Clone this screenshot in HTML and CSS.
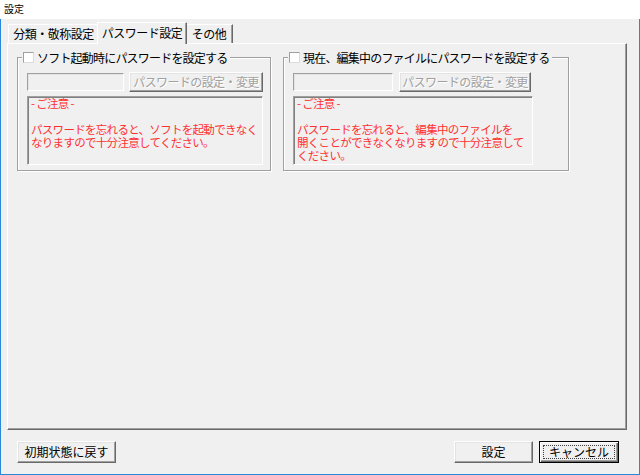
FILE: index.html
```html
<!DOCTYPE html>
<html lang="ja">
<head>
<meta charset="utf-8">
<link rel="stylesheet" href="styles.css">
</head>
<body>
<div class="window">
  <div class="titlebar">設定</div>
  <div class="client">
    <div class="tabs">
      <div class="tab t1">分類・敬称設定</div>
      <div class="tab sel t2">パスワード設定</div>
      <div class="tab t3">その他</div>
    </div>
    <div class="panel">
      <div class="groups">
        <fieldset class="group g1">
          <legend><span class="check"></span><span class="label">ソフト起動時にパスワードを設定する</span></legend>
          <div class="row">
            <div class="edit e1"></div>
            <div class="btn disabled b1">パスワードの設定・変更</div>
          </div>
          <div class="note n1">- ご注意 -<br><br>パスワードを忘れると、ソフトを起動できなく<br>なりますので十分注意してください。</div>
        </fieldset>
        <fieldset class="group g2">
          <legend><span class="check"></span><span class="label">現在、編集中のファイルにパスワードを設定する</span></legend>
          <div class="row">
            <div class="edit e2"></div>
            <div class="btn disabled b2">パスワードの設定・変更</div>
          </div>
          <div class="note n2">- ご注意 -<br><br>パスワードを忘れると、編集中のファイルを<br>開くことができなくなりますので十分注意して<br>ください。</div>
        </fieldset>
      </div>
    </div>
    <div class="footer">
      <div class="pbtn reset">初期状態に戻す</div>
      <div class="spacer"></div>
      <div class="pbtn ok">設定</div>
      <div class="pbtn cancel default"><span class="focus">キャンセル</span></div>
    </div>
  </div>
</div>
</body>
</html>
```

FILE: styles.css
```css
* { box-sizing: border-box; }
html, body { margin: 0; padding: 0; }
body {
  width: 640px;
  height: 475px;
  overflow: hidden;
  font-family: "Noto Sans CJK JP", "Noto Sans", sans-serif;
  font-size: 12px;
  color: #000;
  background: #fff;
}
.window {
  width: 640px;
  height: 475px;
  display: flex;
  flex-direction: column;
}
.titlebar {
  height: 19px;
  background: #fff;
  font-size: 10px;
  line-height: 18px;
  padding-left: 4px;
  color: #000;
}
.client {
  flex: 1;
  background: #f0f0f0;
  border: 1px solid #2b87d8;
  border-top: none;
  display: flex;
  flex-direction: column;
  padding-top: 3px;
}
.tabs {
  height: 21px;
  display: flex;
  align-items: flex-end;
  padding-left: 7px;
  position: relative;
  z-index: 1;
}
.tab {
  height: 19px;
  line-height: 17px;
  text-align: center;
  letter-spacing: -0.5px;
  background: #f0f0f0;
  border-top: 1px solid #fff;
  border-left: 1px solid #fff;
  border-right: 1px solid #696969;
  box-shadow: inset -1px 0 #a0a0a0;
  white-space: nowrap;
}
.t1 { width: 91px; }
.t2 { width: 90px; }
.t3 { width: 48px; }
.tab.sel {
  height: 22px;
  margin: 0 -2px -1px -2px;
  line-height: 19px;
  position: relative;
  z-index: 2;
}
.panel {
  height: 387px;
  margin-left: 6px;
  width: 620px;
  border-top: 1px solid #fff;
  border-left: 1px solid #fff;
  border-right: 1px solid #696969;
  border-bottom: 1px solid #696969;
  box-shadow: inset -1px -1px #a0a0a0;
  padding: 7px 0 0 9px;
}
.groups {
  display: flex;
  gap: 12px;
  align-items: flex-start;
}
.group {
  margin: 0;
  border: 1px solid #a0a0a0;
  box-shadow: inset 1px 1px #fff, 1px 1px #fff;
  padding: 8px 6px 6px 9px;
  height: 120px;
}
.g1 { width: 254px; }
.g2 { width: 286px; }
legend {
  margin-left: -5px;
  padding: 0 3px 0 1px;
  display: flex;
  align-items: center;
  gap: 3px;
  height: 13px;
  background: #f0f0f0;
}
.check {
  width: 11px;
  height: 11px;
  background: #fff;
  border: 1px solid;
  border-color: #a0a0a0 #dcdcdc #dcdcdc #a0a0a0;
}
.label {
  line-height: 13px;
  letter-spacing: -0.8px;
  white-space: nowrap;
}
.row {
  display: flex;
  align-items: center;
}
.edit {
  height: 18px;
  background: #f0f0f0;
  border: 1px solid;
  border-color: #a0a0a0 #fff #fff #a0a0a0;
  box-shadow: inset 1px 1px #e3e3e3;
}
.e1 { width: 97px; margin-right: 5px; }
.e2 { width: 100px; margin-right: 6px; }
.btn {
  height: 20px;
  text-align: center;
  line-height: 17px;
  letter-spacing: -0.6px;
  white-space: nowrap;
  background: #f0f0f0;
  border: 1px solid;
  border-color: #fff #696969 #696969 #fff;
  box-shadow: inset -1px -1px #a0a0a0, inset 1px 1px #e3e3e3;
}
.btn.disabled {
  color: #a0a0a0;
  text-shadow: 1px 1px #fff;
}
.b1 { width: 134px; }
.b2 { width: 132px; }
.note {
  margin-top: 4px;
  height: 69px;
  border: 1px solid;
  border-color: #a0a0a0 #fff #fff #a0a0a0;
  box-shadow: inset 1px 1px #808080;
  padding: 0 0 0 3px;
  color: #ff3030;
  font-size: 11.5px;
  letter-spacing: -0.7px;
  line-height: 13px;
  white-space: nowrap;
  overflow: hidden;
}
.n1 { width: 236px; }
.n2 { width: 240px; }
.footer {
  display: flex;
  align-items: flex-start;
  padding: 11px 20px 0 16px;
  gap: 6px;
}
.spacer { flex: 1; }
.pbtn {
  height: 22px;
  line-height: 19px;
  text-align: center;
  background: #f0f0f0;
  border: 1px solid;
  border-color: #fff #696969 #696969 #fff;
  box-shadow: inset -1px -1px #a0a0a0, inset 1px 1px #e3e3e3;
  white-space: nowrap;
}
.reset { width: 99px; }
.ok { width: 79px; }
.cancel { width: 80px; }
.pbtn.default {
  border: 1px solid #000;
  box-shadow: inset 1px 1px #fff, inset -1px -1px #696969, inset -2px -2px #a0a0a0;
  padding: 3px;
}
.focus {
  display: block;
  height: 14px;
  line-height: 12px;
  border: 1px dotted #404040;
}
```
